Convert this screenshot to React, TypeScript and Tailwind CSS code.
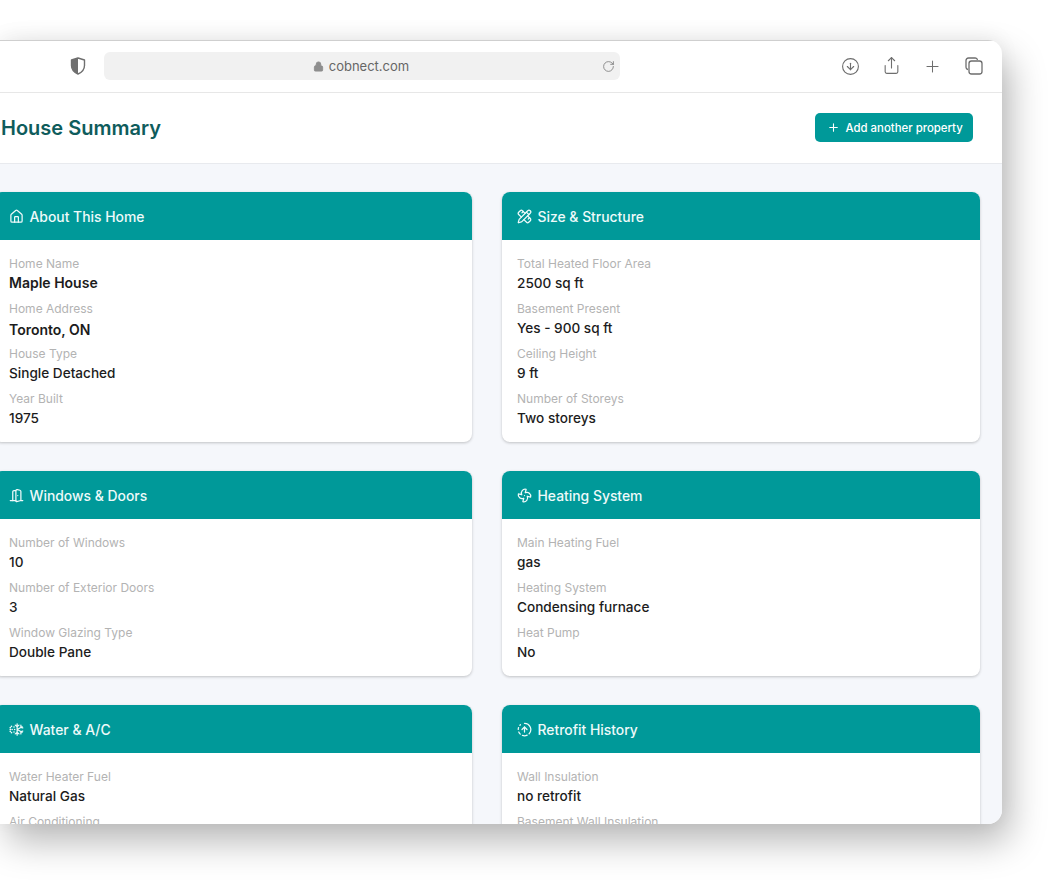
import { House, PencilRuler, DoorOpen, Fan, CircleFadingArrowUp, Plus, RotateCw, Lock, CircleArrowDown, Share } from "lucide-react";
import type { ReactNode } from "react";

type Row = { label: string; value: string; strong?: boolean; low?: boolean };

function Card({ icon, title, rows }: { icon: ReactNode; title: string; rows: Row[] }) {
	return (
		<div className="rounded-lg bg-white shadow-[0_1px_3px_rgba(0,0,0,0.22)] overflow-hidden">
			<div className="flex h-[48px] items-center gap-[6px] bg-[#009999] pl-[14.5px] text-[13.9px] font-medium text-[#eefafa]">
				{icon}
				<span className="mt-[2px]">{title}</span>
			</div>
			<div className="px-[15px] pt-[15px] pb-[7px]">
				{rows.map((row) => (
					<div key={row.label} className={row.low ? "mb-[5px]" : "mb-[7px]"}>
						<div className="text-[12px] leading-[18px] text-[#b3b3b3]">{row.label}</div>
						<div
							className={`leading-[20px] text-[#1c1c1c] ${row.strong ? "text-[14px] font-semibold" : "text-[13.6px] font-medium"} ${row.low ? "pt-[2px]" : ""}`}
						>
							{row.value}
						</div>
					</div>
				))}
			</div>
		</div>
	);
}

function ShieldIcon() {
	return (
		<svg className="mb-[2px]" width="16" height="18" viewBox="0 0 16 18" fill="none">
			<path d="M8 1 L14.5 3 V8.5 C14.5 12.5 11.5 15.5 8 17 C4.5 15.5 1.5 12.5 1.5 8.5 V3 Z" stroke="#6f6f6f" strokeWidth="1.4" strokeLinejoin="round" />
			<path d="M8 1 L1.5 3 V8.5 C1.5 12.5 4.5 15.5 8 17 Z" fill="#6f6f6f" />
		</svg>
	);
}

function TabsIcon() {
	return (
		<svg width="20" height="20" viewBox="0 0 20 20" fill="none" stroke="#6e6e6e" strokeWidth="1.3">
			<path d="M4 13.5 C2.8 13.3 2 12.5 2 11.3 V4.5 C2 3 3 2 4.5 2 H11.3 C12.5 2 13.3 2.8 13.5 4" />
			<rect x="5" y="5" width="13" height="13" rx="2.5" />
		</svg>
	);
}

// snowflake whose left half breaks up into dots
function WaterIcon() {
	return (
		<svg width="15" height="15" viewBox="0 0 24 24" fill="none" stroke="currentColor" strokeWidth="2" strokeLinecap="round">
			<path d="M13 3v18M13 12l8-4.5M13 12l8 4.5M10 5l3 2.5 3-2.5M10 19l3-2.5 3 2.5M19 5v3.5l3 1M19 19v-3.5l3-1" />
			<path d="M9 12h.01M5 12h.01M2 12h.01M8 8h.01M8 16h.01M4 7h.01M4 17h.01M2 9h.01M2 15h.01" strokeWidth="2.6" />
		</svg>
	);
}

export default function App() {
	const iconClass = "size-[15px]";
	return (
		<div className="h-[884px] w-[1052px] overflow-hidden bg-white pt-[40px] font-['Inter',sans-serif]">
			<div className="flex h-[784px] w-[1002px] flex-col overflow-hidden rounded-r-[14px] bg-white shadow-[8px_18px_36px_rgba(0,0,0,0.28),0_-4px_20px_rgba(0,0,0,0.05)]">
				{/* browser toolbar */}
				<div className="flex h-[53px] shrink-0 items-center border-t border-b border-t-[#cfcfcf] border-b-[#e7e7e7] pl-[70px]">
					<ShieldIcon />
					<div className="relative mb-[1px] ml-[18px] flex h-[28px] w-[516px] items-center justify-center gap-[5px] rounded-md bg-[#f1f1f1] pr-[2px] text-[13px] text-[#666666]">
						<Lock className="size-[11px] fill-[#8e8e8e] text-[#8e8e8e]" />
						<span className="mt-[2px]">cobnect.com</span>
						<RotateCw className="absolute right-[5px] size-[13px] text-[#7a7a7a]" strokeWidth={1.5} />
					</div>
					<div className="mb-[1px] ml-[221px] flex items-center">
						<CircleArrowDown className="size-[19px] text-[#6e6e6e]" strokeWidth={1.4} />
						<Share className="mb-[1px] ml-[22px] size-[19px] text-[#6e6e6e]" strokeWidth={1.4} />
						<Plus className="ml-[22px] size-[19px] text-[#6e6e6e]" strokeWidth={1.3} />
						<div className="ml-[22px] mb-[1px]">
							<TabsIcon />
						</div>
					</div>
				</div>
				{/* page header */}
				<div className="flex h-[71px] shrink-0 items-center justify-between border-b border-[#e8eaee] pl-[1px] pr-[29px]">
					<h1 className="text-[20px] font-semibold text-[#0f5c5c]">House Summary</h1>
					<button className="mb-[2px] flex h-[29px] w-[158px] items-center gap-[6px] rounded-[5px] bg-[#009999] pl-[11.5px] text-[11.4px] font-medium text-white">
						<Plus className="size-[13px]" />
						<span className="mt-[3px]">Add another property</span>
					</button>
				</div>
				<div className="flex-1 overflow-hidden bg-[#f5f7fb] pt-[28px]">
					<div className="ml-[-6px] grid grid-cols-[478px_478px] gap-x-[30px] gap-y-[29px]">
						<Card
							icon={<House className={iconClass} />}
							title="About This Home"
							rows={[
								{ label: "Home Name", value: "Maple House", strong: true },
								{ label: "Home Address", value: "Toronto, ON", strong: true, low: true },
								{ label: "House Type", value: "Single Detached" },
								{ label: "Year Built", value: "1975" },
							]}
						/>
						<Card
							icon={<PencilRuler className={iconClass} />}
							title="Size & Structure"
							rows={[
								{ label: "Total Heated Floor Area", value: "2500 sq ft" },
								{ label: "Basement Present", value: "Yes - 900 sq ft" },
								{ label: "Ceiling Height", value: "9 ft" },
								{ label: "Number of Storeys", value: "Two storeys" },
							]}
						/>
						<Card
							icon={<DoorOpen className={iconClass} />}
							title="Windows & Doors"
							rows={[
								{ label: "Number of Windows", value: "10" },
								{ label: "Number of Exterior Doors", value: "3" },
								{ label: "Window Glazing Type", value: "Double Pane" },
							]}
						/>
						<Card
							icon={<Fan className={iconClass} />}
							title="Heating System"
							rows={[
								{ label: "Main Heating Fuel", value: "gas" },
								{ label: "Heating System", value: "Condensing furnace" },
								{ label: "Heat Pump", value: "No" },
							]}
						/>
						<Card
							icon={<WaterIcon />}
							title="Water & A/C"
							rows={[
								{ label: "Water Heater Fuel", value: "Natural Gas" },
								{ label: "Air Conditioning", value: "Central" },
							]}
						/>
						<Card
							icon={<CircleFadingArrowUp className={iconClass} />}
							title="Retrofit History"
							rows={[
								{ label: "Wall Insulation", value: "no retrofit" },
								{ label: "Basement Wall Insulation", value: "no retrofit" },
							]}
						/>
					</div>
				</div>
			</div>
		</div>
	);
}
